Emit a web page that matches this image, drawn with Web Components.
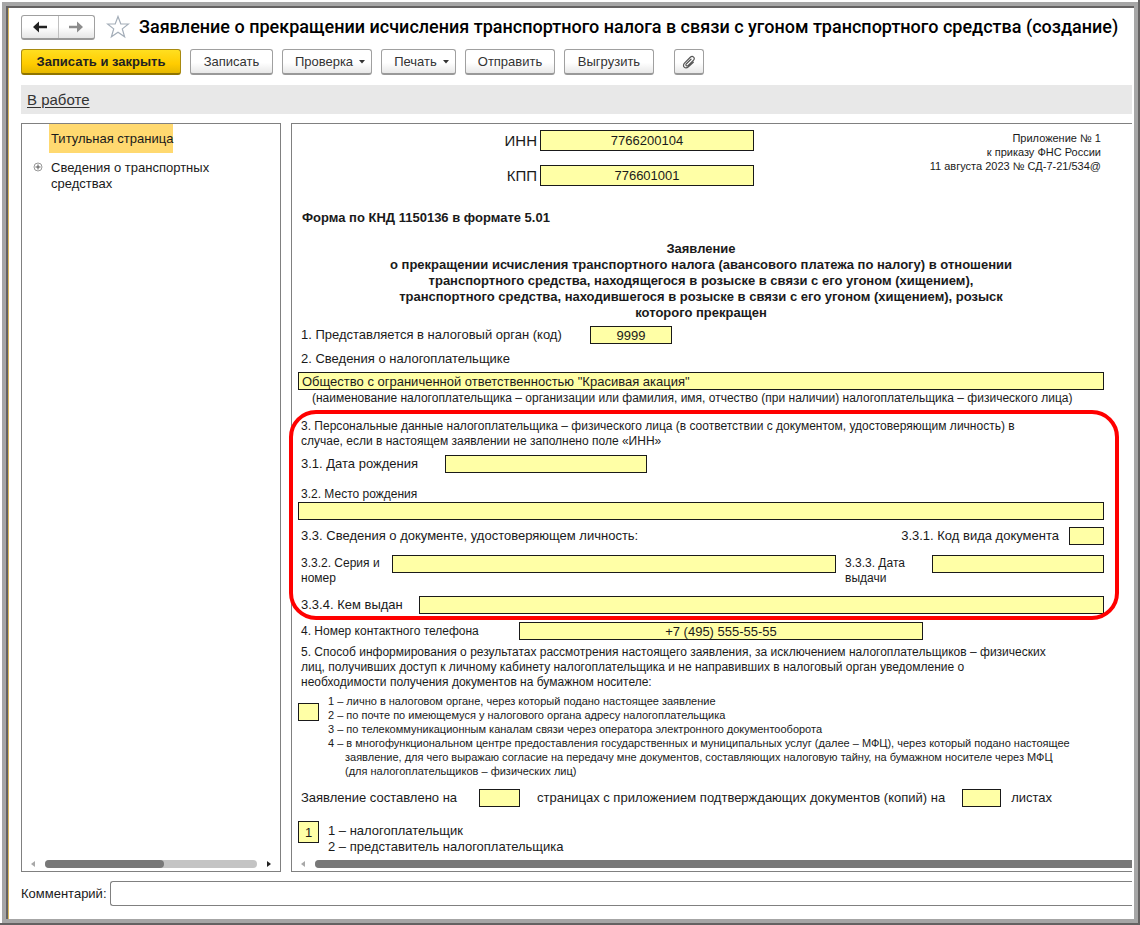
<!DOCTYPE html>
<html lang="ru">
<head>
<meta charset="utf-8">
<title>Заявление о прекращении исчисления транспортного налога</title>
<style>
  body { margin: 0; background: #fff; color: #1a1a1a; font: 12px/16px "Liberation Sans", Arial, sans-serif; }
</style>
</head>
<body>
<app-window>
  <title-row>Заявление о прекращении исчисления транспортного налога в связи с угоном транспортного средства (создание)</title-row>
  <command-bar>
    <tool-button primary>Записать и закрыть</tool-button>
    <tool-button>Записать</tool-button>
    <tool-button menu>Проверка</tool-button>
    <tool-button menu>Печать</tool-button>
    <tool-button>Отправить</tool-button>
    <tool-button>Выгрузить</tool-button>
    <attach-button></attach-button>
  </command-bar>
  <status-strip><a href="#">В работе</a></status-strip>
  <split-view>
    <section-tree slot="side"></section-tree>
    <tax-form slot="main"></tax-form>
  </split-view>
  <comment-field>Комментарий:</comment-field>
</app-window>

<script>
function define(name, html) {
  const template = document.createElement('template');
  template.innerHTML = html;
  customElements.define(name, class extends HTMLElement {
    constructor() {
      super();
      this.attachShadow({ mode: 'open' }).append(template.content.cloneNode(true));
    }
  });
}

define('app-window', `
<style>
  :host { display: flex; box-sizing: border-box; min-height: 100vh; padding: 2px 0 0 2px; border: solid #646262; border-width: 0 2px 2px 0; }
  .frame { flex: 1; min-width: 0; display: flex; border: 4px solid #a6a6a6; }
  .well { flex: 1; min-width: 0; display: flex; border: solid #646262; border-width: 2px 0 0 2px; padding-right: 2px; }
  main { flex: 1; min-width: 0; display: flex; flex-direction: column; border-left: 1px solid #d8b860; padding: 7px 0 13px 12px; }
</style>
<div class="frame"><div class="well"><main><slot></slot></main></div></div>`);

define('title-row', `
<style>
  :host { display: flex; align-items: center; height: 24px; overflow: visible; }
  nav { display: flex; box-sizing: border-box; width: 74px; height: 25px; flex: none; border: 1px solid #a0a0a0; border-bottom: 2px solid #999; border-radius: 3px; background: linear-gradient(#fff 50%, #e6e6e6); }
  button { flex: 1; padding: 0; border: 0; background: none; display: grid; place-items: center; }
  button + button { border-left: 1px solid #c0c0c0; }
  .star { flex: none; margin: 0 9px 0 11px; }
  h1 { margin: 0; flex: 1; min-width: 0; overflow: hidden; white-space: nowrap; font: 500 18px/24px Roboto, "Liberation Sans", sans-serif; color: #000; }
</style>
<nav aria-label="История">
  <button aria-label="Назад"><svg width="14" height="12" viewBox="0 0 14 12"><path d="M0 6L6 .500V4.700H14V7.300H6V11.500Z" fill="#222"/></svg></button>
  <button aria-label="Вперёд"><svg width="14" height="12" viewBox="0 0 14 12"><path d="M14 6L8 .500V4.700H0V7.300H8V11.500Z" fill="#8c8c8c"/></svg></button>
</nav>
<svg class="star" width="24" height="24" viewBox="0 0 24 24"><path d="M12 1.500L14.800 9H22.500L16.300 13.900L18.600 21.800L12 17.200L5.400 21.800L7.700 13.900L1.500 9H9.200Z" fill="#fff" stroke="#a3adb8" stroke-width="1.200"/></svg>
<h1><slot></slot></h1>`);

define('command-bar', `
<style>
  :host { display: grid; grid-template-columns: 160px 83px 90px 75px 90px 90px 41px; gap: 9px; margin-top: 10px; }
  ::slotted(attach-button) { margin-left: 11px; }
</style><slot></slot>`);

const buttonCss = `
  :host { display: block; }
  button { display: flex; align-items: center; justify-content: center; box-sizing: border-box; width: 100%; height: 26px; margin: 0; padding: 0; border: 1px solid #a0a0a0; border-bottom: 2px solid #999; border-radius: 3px; background: linear-gradient(#fff 55%, #e8e8e8); color: #333; font: 13px/16px "Liberation Sans", Arial, sans-serif; white-space: nowrap; }`;

define('tool-button', `
<style>${buttonCss}
  :host([primary]) button { border-color: #a88a10 #a88a10 #8f7400; background: linear-gradient(#ffdf20, #fc0 60%, #e6b800); color: #222; font-weight: 700; }
  svg { display: none; margin-left: 6px; }
  :host([menu]) button { padding-left: 6px; }
  :host([menu]) svg { display: block; }
</style>
<button><slot></slot><svg width="6" height="4" viewBox="0 0 6 4"><path d="M0 0H6L3 3.500Z" fill="#333"/></svg></button>`);

define('attach-button', `
<style>${buttonCss}</style>
<button aria-label="Файлы"><svg width="14" height="14" viewBox="0 0 14 14"><path d="M11.300 7.200L6.400 11.800C3.300 14.600-.300 11.200 2.500 8.200L8.300 2.300C10.600 .200 13.700 2.900 11.600 5.200L6.200 10.400C4.700 11.700 3 10.200 4.400 8.700L9 4.200" fill="none" stroke="#555" stroke-width="1.200" stroke-linecap="round"/></svg></button>`);

define('status-strip', `
<style>
  :host { display: flex; align-items: center; height: 29px; margin-top: 10px; padding: 0 6px; background: #e8e8e8; font-size: 15px; }
  ::slotted(a) { color: #333; text-decoration: underline; text-underline-offset: 2px; }
</style><slot></slot>`);

define('split-view', `
<style>
  :host { flex: 1; display: flex; gap: 10px; margin-top: 9px; }
  .pane { display: flex; flex-direction: column; border: 1px solid #808080; }
  .side { flex: none; width: 258px; }
  .main { flex: 1; min-width: 0; border-right: 0; }
</style>
<div class="pane side"><slot name="side"></slot></div>
<div class="pane main"><slot name="main"></slot></div>`);

define('scroll-strip', `
<style>
  :host { display: flex; align-items: center; height: 8px; margin-bottom: 3px; padding-left: 9px; }
  svg { flex: none; }
  .track { flex: 1; height: 8px; margin: 0 9px; border-radius: 4px; background: #c4c4c4; }
  .thumb { width: 56%; height: 8px; border-radius: 4px; background: #787878; }
  .next { margin-right: 9px; }
  :host([open-end]) .track { margin-right: 0; border-radius: 4px 0 0 4px; }
  :host([open-end]) .thumb { width: 100%; border-radius: 4px 0 0 4px; }
  :host([open-end]) .next { display: none; }
</style>
<svg width="5" height="6" viewBox="0 0 5 6"><path d="M4 0V6L0 3Z" fill="#a8a8a8"/></svg>
<div class="track"><div class="thumb"></div></div>
<svg class="next" width="5" height="6" viewBox="0 0 5 6"><path d="M1 0V6L5 3Z" fill="#222"/></svg>`);

define('section-tree', `
<style>
  :host { flex: 1; display: flex; flex-direction: column; font-size: 13px; line-height: 16px; }
  ul { flex: 1; margin: 0; padding: 0; list-style: none; }
  li { display: grid; grid-template-columns: 27px 1fr; align-items: start; }
  li + li { margin-top: 7px; }
  a { justify-self: start; color: inherit; text-decoration: none; padding: 0 2px; max-width: 200px; }
  .current { grid-column: 2; background: #ffd970; line-height: 29px; padding-right: 0; }
  .node { margin: 2px 0 0 11px; }
</style>
<ul>
  <li><a class="current" href="#">Титульная страница</a></li>
  <li><svg class="node" width="10" height="10" viewBox="0 0 10 10"><circle cx="5" cy="5" r="4" fill="#fff" stroke="#999"/><path d="M2.500 5H7.500M5 2.500V7.500" stroke="#555"/></svg><a href="#">Сведения о транспортных<br>средствах</a></li>
</ul>
<scroll-strip></scroll-strip>`);

define('tax-form', `
<style>
  :host { flex: 1; display: flex; flex-direction: column; }
  form { flex: 1; padding: 6px 28px 0 6px; }
  input { box-sizing: border-box; width: 100%; min-width: 0; height: 18px; margin: 0; padding: 0 3px; border: 1px solid #1a1a1a; border-radius: 0; background: #ffffa6; color: #1a1a1a; font: 13px/16px "Liberation Sans", Arial, sans-serif; text-align: center; outline: 0; }
  p, h2, fieldset, ol { margin: 0; padding: 0; border: 0; }
  .row { display: grid; }
  .text, label { padding-left: 3px; white-space: nowrap; }
  .wide { font-size: 13px; line-height: 18px; }
  .tight { font-size: 12px; line-height: 15px; }
  .head { grid-template-columns: 239px 214px 1fr; column-gap: 3px; row-gap: 14px; }
  .head label { text-align: right; font-size: 15px; line-height: 21px; }
  .head input { height: 21px; }
  .annex { grid-column: 3; grid-row: 1 / 3; padding: 1px 3px 0 0; text-align: right; font-size: 11px; line-height: 14px; }
  .knd, h2 { font-size: 13px; line-height: 16px; font-weight: 700; }
  .knd { margin-top: 24px; padding-left: 4px; }
  h2 { margin-top: 15px; text-align: center; }
  .office { margin-top: 5px; grid-template-columns: 292px 82px; }
  .payer { margin-top: 6px; padding-bottom: 4px; display: block; }
  .payer-name { display: block; text-align: left; }
  .note { padding-left: 14px; font-size: 12px; line-height: 16px; }
  fieldset { position: relative; margin-top: 13px; min-width: 0; }
  .mark { position: absolute; inset: -9px -15px -6px -9px; border: 4px solid #f00; border-radius: 27px; pointer-events: none; }
  .birth { margin-top: 6px; grid-template-columns: 147px 202px; }
  .place { display: block; margin-top: 14px; }
  .place-input { display: block; }
  .kind { margin-top: 7px; grid-template-columns: 1fr auto 35px; column-gap: 10px; }
  .series { margin-top: 10px; grid-template-columns: 94px 444px 96px 1fr; }
  .series label + input + label { padding-left: 9px; }
  .series label { padding-top: 1px; margin-bottom: -1px; }
  .issuer { margin-top: 11px; grid-template-columns: 121px 1fr; }
  .phone { margin-top: 8px; grid-template-columns: 221px 404px; }
  .phone label { line-height: 18px; }
  .method { margin-top: 5px; }
  .choice { grid-template-columns: 21px 1fr; column-gap: 9px; }
  .ways { margin-top: 4px; font-size: 11px; line-height: 14px; }
  .ways input { margin-top: 9px; }
  ol { list-style: none; white-space: nowrap; }
  .ways li { padding-left: 17px; text-indent: -17px; }
  .pages { margin-top: 11px; display: flex; }
  .pages input { flex: none; width: 41px; margin: 0 14px 0 22px; }
  .pages input + label + input { width: 39px; margin: 0 7px 0 17px; }
  .signer { margin-top: 14px; font-size: 13px; line-height: 16px; }
  .signer input { height: 22px; }
  .signer ol { padding: 2px 0 5px 0; }
</style>
<form>
  <div class="row head">
    <label for="inn">ИНН</label><input id="inn" value="7766200104">
    <p class="annex">Приложение № 1<br>к приказу ФНС России<br>11 августа 2023 № СД-7-21/534@</p>
    <label for="kpp">КПП</label><input id="kpp" value="776601001">
  </div>
  <p class="knd">Форма по КНД 1150136 в формате 5.01</p>
  <h2>Заявление<br>о прекращении исчисления транспортного налога (авансового платежа по налогу) в отношении<br>транспортного средства, находящегося в розыске в связи с его угоном (хищением),<br>транспортного средства, находившегося в розыске в связи с его угоном (хищением), розыск<br>которого прекращен</h2>
  <div class="row office"><label class="wide" for="office">1. Представляется в налоговый орган (код)</label><input id="office" value="9999"></div>
  <label class="wide payer" for="payer">2. Сведения о налогоплательщике</label>
  <input class="payer-name" id="payer" value='Общество с ограниченной ответственностью "Красивая акация"'>
  <p class="text note">(наименование налогоплательщика – организации или фамилия, имя, отчество (при наличии) налогоплательщика – физического лица)</p>
  <fieldset>
    <p class="text tight">3. Персональные данные налогоплательщика – физического лица (в соответствии с документом, удостоверяющим личность) в<br>случае, если в настоящем заявлении не заполнено поле «ИНН»</p>
    <div class="row birth"><label class="wide" for="born">3.1. Дата рождения</label><input id="born"></div>
    <label class="tight place" for="place">3.2. Место рождения</label>
    <input class="place-input" id="place">
    <div class="row kind"><span class="text wide">3.3. Сведения о документе, удостоверяющем личность:</span><label class="wide" for="kind">3.3.1. Код вида документа</label><input id="kind"></div>
    <div class="row series"><label class="tight" for="series">3.3.2. Серия и<br>номер</label><input id="series"><label class="tight" for="issued">3.3.3. Дата<br>выдачи</label><input id="issued"></div>
    <div class="row issuer"><label class="wide" for="issuer">3.3.4. Кем выдан</label><input id="issuer"></div>
    <div class="mark"></div>
  </fieldset>
  <div class="row phone"><label class="tight" for="phone">4. Номер контактного телефона</label><input id="phone" value="+7 (495) 555-55-55"></div>
  <p class="text tight method">5. Способ информирования о результатах рассмотрения настоящего заявления, за исключением налогоплательщиков – физических<br>лиц, получивших доступ к личному кабинету налогоплательщика и не направивших в налоговый орган уведомление о<br>необходимости получения документов на бумажном носителе:</p>
  <div class="row choice ways"><input aria-label="Способ информирования">
    <ol>
      <li>1 – лично в налоговом органе, через который подано настоящее заявление</li>
      <li>2 – по почте по имеющемуся у налогового органа адресу налогоплательщика</li>
      <li>3 – по телекоммуникационным каналам связи через оператора электронного документооборота</li>
      <li>4 – в многофункциональном центре предоставления государственных и муниципальных услуг (далее – МФЦ), через который подано настоящее<br>заявление, для чего выражаю согласие на передачу мне документов, составляющих налоговую тайну, на бумажном носителе через МФЦ<br>(для налогоплательщиков – физических лиц)</li>
    </ol>
  </div>
  <div class="row pages"><label class="wide" for="pages">Заявление составлено на</label><input id="pages"><label class="wide" for="sheets">страницах с приложением подтверждающих документов (копий) на</label><input id="sheets"><span class="text wide">листах</span></div>
  <div class="row choice signer"><input aria-label="Кто подаёт заявление" value="1">
    <ol><li>1 – налогоплательщик</li><li>2 – представитель налогоплательщика</li></ol>
  </div>
</form>
<scroll-strip open-end></scroll-strip>`);

define('comment-field', `
<style>
  :host { display: flex; align-items: center; gap: 3px; margin-top: 9px; font-size: 13px; }
  input { flex: 1; min-width: 0; box-sizing: border-box; height: 25px; padding: 0 6px; border: 1px solid #808080; border-right: 0; border-radius: 3px 0 0 3px; background: #fff; font: inherit; }
</style>
<label for="comment"><slot></slot></label><input id="comment">`);
</script>
</body>
</html>
